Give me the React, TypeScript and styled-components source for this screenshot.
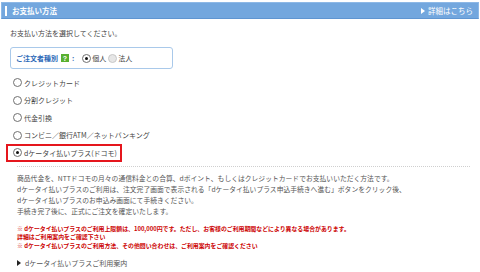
import styled, { createGlobalStyle } from "styled-components";

const GlobalStyle = createGlobalStyle`
  html, body {
    margin: 0;
    padding: 0;
    background: #ffffff;
  }
  body {
    font-family: "Noto Sans CJK JP", "Noto Sans", sans-serif;
    color: #444444;
  }
`;

const Page = styled.div`
  width: 480px;
  height: 272px;
  overflow: hidden;
  padding-top: 2px;
  box-sizing: border-box;
`;

const Header = styled.div`
  display: flex;
  align-items: center;
  height: 17px;
  margin: 0 1px;
  padding: 0 5px 0 3px;
  background: #73a7de;
  border: 1px solid #8db8e6;
  border-bottom-color: #5f95d1;
  box-sizing: border-box;
`;

const Accent = styled.span`
  width: 2px;
  height: 10px;
  background: #ffffff;
  margin-right: 5px;
`;

const Title = styled.span`
  color: #ffffff;
  font-size: 7.5px;
  font-weight: bold;
`;

const DetailLink = styled.span`
  margin-left: auto;
  color: #ffffff;
  font-size: 7.5px;
  display: flex;
  align-items: center;
  gap: 3px;
`;

const Triangle = styled.span<{ $color: string }>`
  display: inline-block;
  width: 0;
  height: 0;
  border-top: 3px solid transparent;
  border-bottom: 3px solid transparent;
  border-left: 4px solid ${(p) => p.$color};
`;

const Content = styled.div`
  padding: 0 10px;
`;

const Lead = styled.div`
  margin-top: 9px;
  font-size: 7px;
  line-height: 10px;
  color: #444444;
`;

const OrderBox = styled.div`
  margin-top: 9px;
  width: 163px;
  height: 22px;
  border: 1px solid #a9c9ea;
  border-radius: 3px;
  box-sizing: border-box;
  display: flex;
  align-items: center;
  padding-left: 5px;
  font-size: 7px;
`;

const OrderLabel = styled.span`
  color: #2f6bb8;
  font-weight: bold;
`;

const Help = styled.span`
  display: inline-flex;
  align-items: center;
  justify-content: center;
  width: 8px;
  height: 8px;
  margin-left: 3px;
  background: #58b030;
  color: #ffffff;
  font-size: 7px;
  font-weight: bold;
  font-family: "Liberation Sans", sans-serif;
`;

const Colon = styled.span`
  color: #2f6bb8;
  font-weight: bold;
  margin: 0 8px 0 3px;
`;

const Radio = styled.span<{ $checked?: boolean; $disabled?: boolean }>`
  position: relative;
  display: inline-block;
  width: 7px;
  height: 7px;
  border-radius: 50%;
  border: 1px solid ${(p) => (p.$disabled ? "#c8c8c8" : "#707070")};
  background: ${(p) => (p.$disabled ? "#e6e6e6" : "#ffffff")};
  flex-shrink: 0;
  &::after {
    content: "";
    display: ${(p) => (p.$checked ? "block" : "none")};
    position: absolute;
    left: 2px;
    top: 2px;
    width: 3px;
    height: 3px;
    border-radius: 50%;
    background: #111111;
  }
`;

const Choice = styled.span`
  margin: 0 2px 0 1px;
  color: #444444;
`;

const OptionList = styled.div`
  margin: 5px 0 0 -4px;
`;

const Option = styled.div<{ $selected?: boolean }>`
  display: flex;
  align-items: center;
  width: fit-content;
  height: 17.5px;
  box-sizing: border-box;
  padding: 0 3px 0 5px;
  border: 2px solid ${(p) => (p.$selected ? "#e5161d" : "transparent")};
  font-size: 7px;
  color: #444444;
  gap: 2px;
`;

const Detail = styled.div`
  margin: 4px 10px 0 17px;
  border-top: 1px dotted #cfcfcf;
  padding-top: 6px;
`;

const Paragraph = styled.div`
  font-size: 6.8px;
  line-height: 11px;
  color: #555555;
`;

const Notes = styled.div`
  margin-top: 8px;
  font-size: 5.9px;
  line-height: 8.7px;
  color: #cc0000;
  font-weight: bold;
`;

const GuideLink = styled.div`
  margin-top: 7px;
  display: flex;
  align-items: center;
  gap: 4px;
  font-size: 7px;
  line-height: 10px;
  color: #555555;
`;

const options = [
  "クレジットカード",
  "分割クレジット",
  "代金引換",
  "コンビニ／銀行ATM／ネットバンキング",
  "dケータイ払いプラス(ドコモ)",
];

const App = () => {
  const selected = options.length - 1;

  return (
    <Page>
      <GlobalStyle />
      <Header>
        <Accent />
        <Title>お支払い方法</Title>
        <DetailLink>
          <Triangle $color="#ffffff" />
          詳細はこちら
        </DetailLink>
      </Header>
      <Content>
        <Lead>お支払い方法を選択してください。</Lead>
        <OrderBox>
          <OrderLabel>ご注文者種別</OrderLabel>
          <Help>?</Help>
          <Colon>:</Colon>
          <Radio $checked />
          <Choice>個人</Choice>
          <Radio $disabled />
          <Choice>法人</Choice>
        </OrderBox>
        <OptionList>
          {options.map((label, i) => (
            <Option key={label} $selected={i === selected}>
              <Radio $checked={i === selected} />
              {label}
            </Option>
          ))}
        </OptionList>
      </Content>
      <Detail>
        <Paragraph>
          商品代金を、NTTドコモの月々の通信料金との合算、dポイント、もしくはクレジットカードでお支払いいただく方法です。
          <br />
          dケータイ払いプラスのご利用は、注文完了画面で表示される「dケータイ払いプラス申込手続きへ進む」ボタンをクリック後、
          <br />
          dケータイ払いプラスのお申込み画面にて手続きください。
          <br />
          手続き完了後に、正式にご注文を確定いたします。
        </Paragraph>
        <Notes>
          ※ dケータイ払いプラスのご利用上限額は、100,000円です。ただし、お客様のご利用期間などにより異なる場合があります。
          <br />
          詳細はご利用案内をご確認下さい
          <br />
          ※ dケータイ払いプラスのご利用方法、その他問い合わせは、ご利用案内をご確認ください
        </Notes>
        <GuideLink>
          <Triangle $color="#222222" />
          dケータイ払いプラスご利用案内
        </GuideLink>
      </Detail>
    </Page>
  );
};

export default App;
